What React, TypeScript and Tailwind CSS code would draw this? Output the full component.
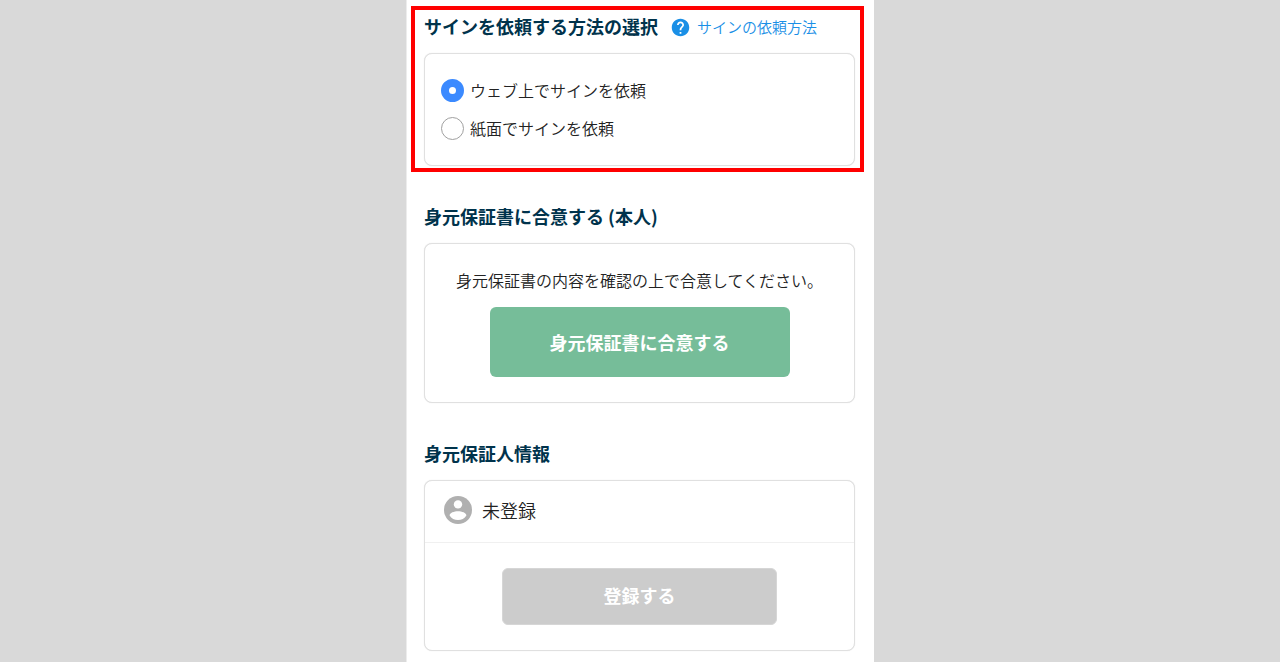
import { useState } from "react";
import type { ReactNode } from "react";
import { MdHelp } from "react-icons/md";

function PersonIcon() {
  return (
    <svg viewBox="0 0 28 28" className="size-7 shrink-0" aria-hidden="true">
      <circle cx="14" cy="14" r="14" fill="#b0b0b0" />
      <circle cx="14" cy="8.4" r="4.2" fill="#ffffff" />
      <path d="M5.6 19.4c0-2.600 4.600-4.200 8.400-4.200s8.400 1.600 8.400 4.200c-1.800 2.900-4.900 4.700-8.400 4.700s-6.600-1.800-8.400-4.700Z" fill="#ffffff" />
    </svg>
  );
}

function Heading({ children }: { children: ReactNode }) {
  return <h2 className="text-[18px] leading-7 font-bold text-[#00334c]">{children}</h2>;
}

function Card({ children }: { children: ReactNode }) {
  return (
    <div className="mt-[13px] rounded-lg border border-[#e0e0e0] bg-white shadow-[0_0_1px_#dddddd]">
      {children}
    </div>
  );
}

const methods = [
  { id: "web", label: "ウェブ上でサインを依頼" },
  { id: "paper", label: "紙面でサインを依頼" },
];

export default function App() {
  const [method, setMethod] = useState("web");

  return (
    <div className="min-h-screen bg-[#d9d9d9] font-['Noto_Sans_CJK_JP',sans-serif] text-[16px] font-[350] text-[#222222]">
      <main className="mx-auto flex min-h-screen max-w-[468px] flex-col gap-9 border-l border-[#ececec] bg-white pt-3 pr-[19px] pb-3 pl-[17px]">
        <section className="relative">
          <div className="flex items-end gap-3">
            <Heading>サインを依頼する方法の選択</Heading>
            <a href="#help" className="flex items-center gap-[6px] text-[15px] leading-[26px] text-[#1a8fe6]">
              <MdHelp size={21} aria-hidden="true" />
              サインの依頼方法
            </a>
          </div>
          <Card>
            <fieldset className="px-4 pt-[17px] pb-[18px]">
              {methods.map((m) => (
                <label key={m.id} className="flex h-[38px] items-center gap-[6px]">
                  <input
                    type="radio"
                    name="method"
                    value={m.id}
                    checked={method === m.id}
                    onChange={() => setMethod(m.id)}
                    className="size-[23px] shrink-0 appearance-none rounded-full border border-[#a0a0a0] bg-white checked:border-8 checked:border-[#3b8aff]"
                  />
                  {m.label}
                </label>
              ))}
            </fieldset>
          </Card>
          <div className="pointer-events-none absolute -top-[6px] -right-[9px] -bottom-[6px] -left-[13px] border-4 border-[#ff0000]" />
        </section>

        <section>
          <Heading>身元保証書に合意する (本人)</Heading>
          <Card>
            <div className="flex flex-col items-center gap-[15px] px-4 pt-6 pb-[25px]">
              <p className="leading-6">身元保証書の内容を確認の上で合意してください。</p>
              <button
                type="button"
                className="h-[70px] w-full max-w-[300px] rounded-md bg-[#76bd99] text-[18px] font-bold text-white"
              >
                身元保証書に合意する
              </button>
            </div>
          </Card>
        </section>

        <section>
          <Heading>身元保証人情報</Heading>
          <Card>
            <div className="flex items-center gap-[10px] border-b border-[#f0f0f0] px-[19px] pt-3 pb-[15px] text-[18px]">
              <PersonIcon />
              <p className="leading-[34px]">未登録</p>
            </div>
            <div className="flex justify-center px-4 py-[25px]">
              <button
                type="button"
                className="h-[57px] w-full max-w-[275px] rounded-md border border-[#d6d6d6] bg-[#cccccc] pb-[3px] text-[18px] font-bold text-white"
              >
                登録する
              </button>
            </div>
          </Card>
        </section>
      </main>
    </div>
  );
}
